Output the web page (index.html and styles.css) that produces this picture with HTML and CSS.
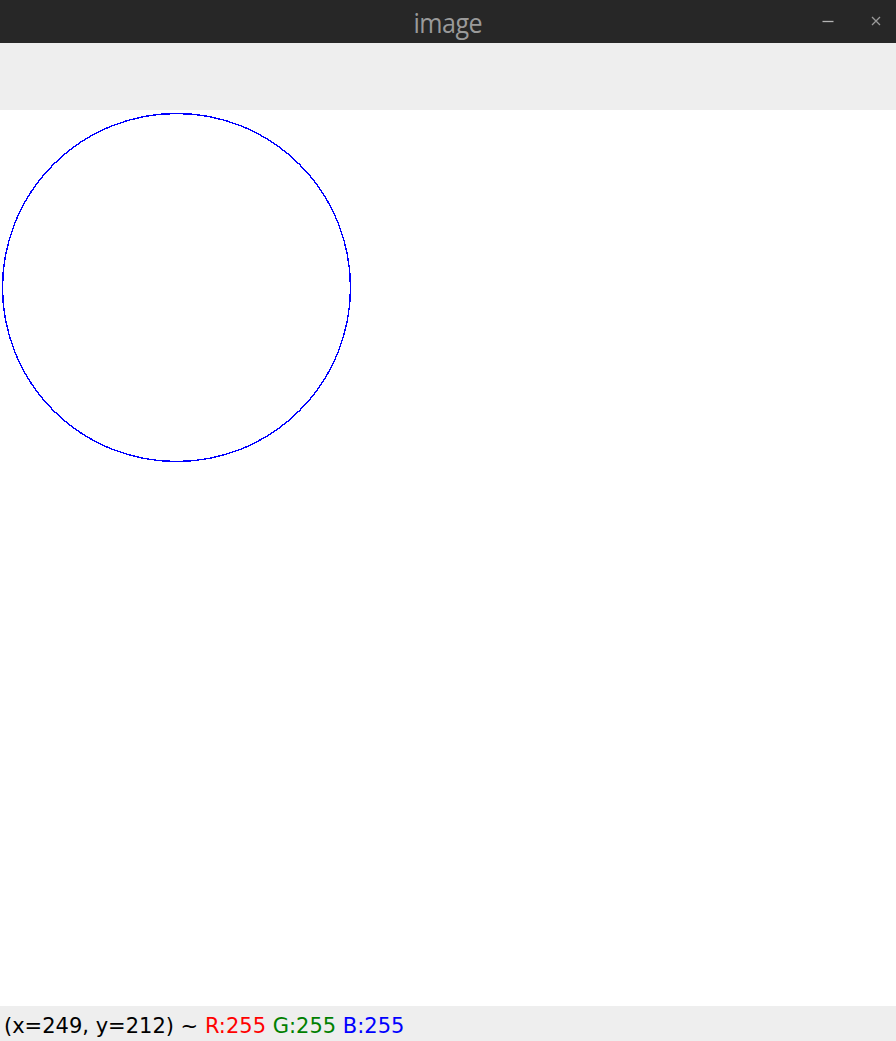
FILE: index.html
```html
<!DOCTYPE html>
<html>
<head>
<meta charset="utf-8">
<link rel="stylesheet" href="styles.css">
</head>
<body>
<div class="window">
  <div class="titlebar">
    <span class="title">image</span>
    <div class="controls">
      <svg class="ctl" width="12" height="12" viewBox="0 0 12 12"><line x1="0.5" y1="6.5" x2="11.5" y2="6.5" stroke="#b4b4b4" stroke-width="1.3"/></svg>
      <svg class="ctl" width="10" height="10" viewBox="0 0 10 10"><path d="M1 1 L9 9 M9 1 L1 9" stroke="#9a9a9a" stroke-width="1.3" fill="none"/></svg>
    </div>
  </div>
  <div class="toolbar"></div>
  <div class="canvas">
    <svg class="drawing" width="896" height="896" viewBox="0 0 896 896">
      <circle cx="176.5" cy="177.5" r="174" fill="none" stroke="#0000ff" stroke-width="1.4" shape-rendering="crispEdges"/>
    </svg>
  </div>
  <div class="status">(x=249, y=212) ~ <span class="r">R:255</span> <span class="g">G:255</span> <span class="b">B:255</span></div>
</div>
</body>
</html>
```
FILE: styles.css
```css
html, body { margin: 0; padding: 0; }
body { width: 896px; height: 1041px; overflow: hidden; background: #fff; }
.window { display: flex; flex-direction: column; height: 1041px; }
.titlebar {
  height: 43px; background: #272727; position: relative;
  display: flex; align-items: center; justify-content: center;
}
.title {
  font-family: "Open Sans", "Noto Sans", sans-serif; font-size: 27px;
  color: #9a9a9a; letter-spacing: -0.6px; margin-top: 1px; margin-left: 0px;
  transform: scaleX(0.93);
}
.controls { position: absolute; left: 822px; top: 15px; display: flex; align-items: center; gap: 37px; }
.ctl { display: block; }
.toolbar { height: 67px; background: #eeeeee; }
.canvas { flex: 1; background: #fff; overflow: hidden; }
.drawing { display: block; }
.status {
  height: 35px; background: #eeeeee; box-sizing: border-box;
  font-family: "DejaVu Sans", sans-serif; font-size: 21px; color: #000;
  padding-left: 4px; line-height: 40px; white-space: nowrap; overflow: hidden;
}
.r { color: #ff0000; }
.g { color: #008000; }
.b { color: #0000ff; }
```
